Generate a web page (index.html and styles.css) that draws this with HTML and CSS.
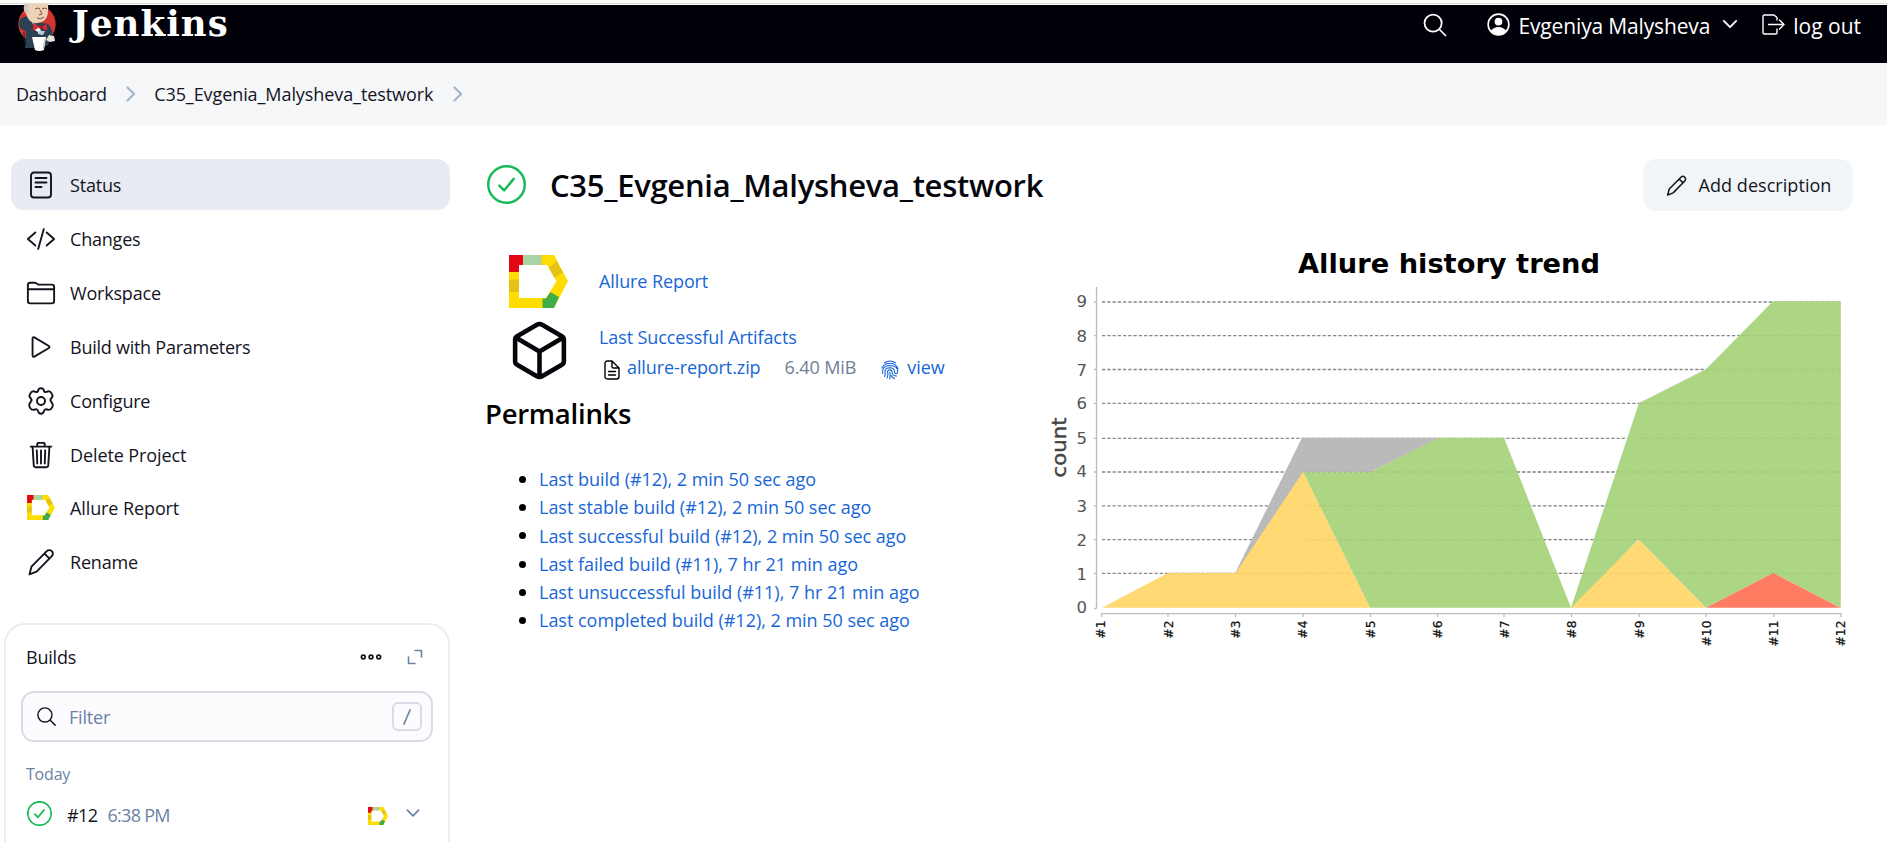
FILE: index.html
```html
<!DOCTYPE html>
<html lang="en">
<head>
<meta charset="utf-8">
<title>C35_Evgenia_Malysheva_testwork [Jenkins]</title>
<link rel="stylesheet" href="styles.css">
</head>
<body>
<svg class="defs" width="0" height="0">
  <symbol id="search" viewBox="0 0 512 512"><path d="M221.09 64a157.09 157.09 0 10157.09 157.09A157.1 157.1 0 00221.09 64zM338.29 338.29L448 448"/></symbol>
  <symbol id="pen" viewBox="0 0 30 30"><path d="M3.5 27.3l2-7.7L20.8 4.2a3.5 3.5 0 015 5L10.6 24.6zM18.5 6.6l5 5"/></symbol>
  <symbol id="chevron" viewBox="0 0 512 512"><path d="M112 184l144 144 144-144"/></symbol>
  <symbol id="check" viewBox="0 0 38 38"><circle cx="19" cy="19" r="17.8"/><path d="M12 20l4.700 4.800L26 13.500"/></symbol>
  <symbol id="allure" viewBox="0 0 59 53">
    <path fill="#ffdd00" d="M0 0H45L59 26.300L45 53H0zM10 10V43H37L47.500 26.300L38 10z" fill-rule="evenodd"/>
    <path fill="#e30613" d="M0 0H14V10H10V17H0z"/>
    <path fill="#a9d3a3" d="M14 0H32.500V10H14z"/>
    <path fill="#e3c315" d="M0 24.500H10V37H0zM47.500 6L54 17.500L45.500 23L40 13z"/>
    <path fill="#3fae49" d="M33.500 43.500H37L41.500 37L50 42L45 53H33.500z"/>
  </symbol>
</svg>

<div class="strip"></div>
<header class="header">
  <a class="brand">
    <svg class="butler" viewBox="0 0 42 50">
      <circle cx="21" cy="20" r="18.700" fill="#d5352f"/>
      <path d="M10 28l-6-4q-3-8 3-11l9-1 4 6 12 2q5 4 4 12l-4 9-6 3H9z" fill="#2c4254"/>
      <path d="M8 28q-1 8 2 13" stroke="#16222c" fill="none"/>
      <path d="M9 0Q9 12 14 17q7 5 15-1 4-5 3-16z" fill="#eed2b5"/>
      <path d="M9 0q-3 5 1 10l3-2-1-8z" fill="#cfc9bf"/>
      <path d="M19 5q3-2 5 0m2 0q3-2 5 0M24 6l2 4-3 1m-2 3q4 2 7-1" stroke="#70503c" fill="none"/>
      <path d="M16 18l8 6 2 7-7-5z" fill="#fff"/>
      <path d="M17 19l7 4-7 4zM25 23l6-3v7z" fill="#d42a31"/>
      <circle cx="25" cy="23" r="2" fill="#a91821"/>
      <path d="M22 27l7 0-2 4-5-1z" fill="#c3cdd5"/>
      <path d="M33 31l5 1 1 5-5 1-4-2z" fill="#e7e3dc"/>
      <path d="M16 33h14l-2 13q-5 2-9 0z" fill="#fff"/>
      <path d="M29 35l-2 10" stroke="#babec4" fill="none"/>
    </svg>
    <span class="brand-name">Jenkins</span>
  </a>
  <nav class="tools">
    <a class="tool tool-search"><svg class="ico thin" width="28" height="28"><use href="#search"/></svg></a>
    <a class="tool tool-user">
      <svg width="23" height="23" viewBox="0 0 24 24"><circle cx="12" cy="12" r="10.800" fill="none" stroke="#fff" stroke-width="1.700"/><circle cx="12" cy="9" r="4" fill="#fff"/><path d="M4 18.500q3-4 8-4t8 4q-3 4-8 4t-8-4z" fill="#fff"/></svg>
      <span class="t-user">Evgeniya Malysheva</span>
      <svg class="ico mid user-chev" width="22" height="22"><use href="#chevron"/></svg>
    </a>
    <a class="tool tool-out">
      <svg class="ico" width="23" height="21" viewBox="0 0 23 21" stroke-width="1.400"><path d="M15 6V3.500L12 1H2.500Q1 1 1 2.500v16Q1 20 2.500 20H13.500Q15 20 15 18.500V15M6.500 10.500H22M17.500 6l4.500 4.500L17.500 15"/></svg>
      <span class="t-out">log out</span>
    </a>
  </nav>
</header>

<nav class="crumbs">
  <a class="t-dash">Dashboard</a>
  <svg class="ico crumb-sep" width="10" height="16" viewBox="0 0 10 16"><path d="M1.500 1.500L8 8l-6.500 6.500"/></svg>
  <a class="t-job">C35_Evgenia_Malysheva_testwork</a>
  <svg class="ico crumb-sep" width="10" height="16" viewBox="0 0 10 16"><path d="M1.500 1.500L8 8l-6.500 6.500"/></svg>
</nav>

<div class="page">
  <aside class="side">
    <nav class="tasks">
      <a class="task active"><svg class="ico" width="30" height="30" viewBox="0 0 30 30" stroke-width="1.900"><rect x="5" y="2.500" width="20" height="25" rx="3"/><path d="M9.500 8h11M9.500 12.500h11M9.500 17h6"/></svg><span>Status</span></a>
      <a class="task"><svg class="ico std" viewBox="0 0 512 512"><path d="M160 368L32 256l128-112M352 368l128-112-128-112M304 86l-96 340"/></svg><span>Changes</span></a>
      <a class="task"><svg class="ico std" viewBox="0 0 512 512"><path d="M440 432H72a40 40 0 01-40-40V120a40 40 0 0140-40h75.890a40 40 0 0122.190 6.720l27.840 18.560a40 40 0 0022.190 6.720H440a40 40 0 0140 40v240a40 40 0 01-40 40zM32 192h448"/></svg><span>Workspace</span></a>
      <a class="task"><svg class="ico std" viewBox="0 0 512 512"><path d="M112 111v290c0 17.440 17 28.520 31 20.160l247.900-148.370c12.120-7.250 12.120-26.330 0-33.580L143 90.840c-14-8.360-31 2.720-31 20.160z"/></svg><span class="t-build">Build with Parameters</span></a>
      <a class="task"><svg class="ico gear" viewBox="0 0 30 30"><circle cx="15" cy="15" r="4"/><path d="M12.200 4.500Q12.500 2.200 15 2.200T17.800 4.500Q18.300 6.500 20.500 5.800Q24 4.300 25.500 7.300Q27.700 10.500 25.300 12.200Q23.500 14 25.300 15.800Q27.700 18.300 26.200 21.300Q24.500 24.800 21 23.500Q18.500 22.700 17.900 25.200Q17.500 27.800 15 27.800T12.100 25.200Q11.500 22.700 9 23.500Q5.500 24.800 3.800 21.300Q2.300 18.300 4.700 15.800Q6.500 14 4.700 12.200Q2.300 10.500 4.500 7.300Q6 4.300 9.500 5.800Q11.700 6.500 12.200 4.500z"/></svg><span>Configure</span></a>
      <a class="task"><svg class="ico std" viewBox="0 0 512 512"><path d="M112 112l20 320c.950 18.490 14.400 32 32 32h184c17.670 0 30.870-13.510 32-32l20-320M80 112h352M192 112V72a23.930 23.930 0 0124-24h80a23.930 23.930 0 0124 24v40M256 176v224M184 176l8 224M328 176l-8 224"/></svg><span class="t-del">Delete Project</span></a>
      <a class="task late"><svg class="al-task" preserveAspectRatio="none"><use href="#allure"/></svg><span class="t-del">Allure Report</span></a>
      <a class="task"><svg class="ico pen30" width="30" height="30"><use href="#pen"/></svg><span>Rename</span></a>
    </nav>
    <section class="builds">
      <div class="builds-head">
        <span class="builds-title">Builds</span>
        <svg class="ico" width="22" height="8" viewBox="0 0 22 8" stroke-width="1.700"><circle cx="3.300" cy="4" r="1.900"/><circle cx="11" cy="4" r="1.900"/><circle cx="18.700" cy="4" r="1.900"/></svg>
        <svg class="ico slate expand" width="16" height="16" viewBox="0 0 16 16" stroke-width="1.600"><path d="M8 1.500h6.500V8M1.500 8v6.500H8"/></svg>
      </div>
      <div class="filter">
        <svg class="ico thin" width="23" height="23"><use href="#search"/></svg>
        <span class="ph">Filter</span>
        <kbd class="key"><svg class="ico slate" width="8" height="16" viewBox="0 0 8 16" stroke-width="1.700"><path d="M7 1L1 15"/></svg></kbd>
      </div>
      <div class="today">Today</div>
      <div class="run">
        <svg class="ok ok-s"><use href="#check"/></svg>
        <span class="num">#12</span><span class="time">6:38 PM</span>
        <svg class="al-run"><use href="#allure"/></svg>
        <svg class="ico slate mid run-chev" width="20" height="20"><use href="#chevron"/></svg>
      </div>
    </section>
  </aside>

  <main class="main">
    <div class="title-row">
      <svg class="ok ok-l"><use href="#check"/></svg>
      <h1>C35_Evgenia_Malysheva_testwork</h1>
      <a class="btn"><svg class="ico pen24" width="23" height="23"><use href="#pen"/></svg><span>Add description</span></a>
    </div>
    <div class="cols">
      <div class="left">
        <div class="link-row r-allure"><svg class="al-main" preserveAspectRatio="none"><use href="#allure"/></svg><a class="t-al">Allure Report</a></div>
        <div class="link-row r-art">
          <svg class="ico cube" viewBox="0 0 512 512"><path d="M448 341.370V170.610A32 32 0 00432.110 143l-152-88.460a47.940 47.940 0 00-48.240 0L79.890 143A32 32 0 0064 170.610v170.760A32 32 0 0079.890 369l152 88.460a48 48 0 0048.240 0l152-88.460A32 32 0 00448 341.370zM69 153.990l187 110 187-110M256 463.990v-200"/></svg>
          <div class="art">
            <a class="t-lsa">Last Successful Artifacts</a>
            <div class="files">
              <svg class="ico" width="16" height="20" viewBox="0 0 16 20" stroke-width="1.400"><path d="M1 3.500Q1 1 3.500 1H8l7 7v8.500Q15 19 12.500 19h-9Q1 19 1 16.500zM8 1v5.500Q8 8 9.500 8H15M4.500 11.500h7M4.500 15h7"/></svg>
              <a class="t-zip">allure-report.zip</a><span class="t-size">6.40 MiB</span>
              <svg class="ico fp" width="18" height="20" viewBox="0 0 18 20" stroke-width="1.100"><path d="M3.500 2.800Q9-.8 14.500 2.800M1 8Q3 3.200 9 3.200T17 8.500M1.800 13.500Q.5 5.600 9 5.500Q16.800 5.800 16.800 11.500Q16.600 13.800 14.800 13.600Q13.300 13.200 13.300 11.200M3.600 16.500Q4.600 14 4 11.500Q4 7.800 8.800 7.800Q13.300 8 13.300 11.200M6 18Q7.500 14.500 6.500 11.500Q6.800 9.800 8.800 9.900Q11 10 11 12.200Q11.500 16 15.500 16M8.700 19Q9.600 15.500 8.800 12.200M13.500 18.600Q11 17.800 10.200 15.500"/></svg>
              <a class="t-view">view</a>
            </div>
          </div>
        </div>
        <h2>Permalinks</h2>
        <ul class="perma">
          <li><a>Last build (#12), 2 min 50 sec ago</a></li>
          <li><a>Last stable build (#12), 2 min 50 sec ago</a></li>
          <li><a>Last successful build (#12), 2 min 50 sec ago</a></li>
          <li><a>Last failed build (#11), 7 hr 21 min ago</a></li>
          <li><a>Last unsuccessful build (#11), 7 hr 21 min ago</a></li>
          <li><a>Last completed build (#12), 2 min 50 sec ago</a></li>
        </ul>
      </div>
      <svg class="chart" viewBox="1040 230 813 425" width="813" height="425">
        <text class="c-title" x="1298" y="273" textLength="302" lengthAdjust="spacingAndGlyphs">Allure history trend</text>
        <path class="grid" d="M1102 302H1841M1102 335.700H1841M1102 369.500H1841M1102 403.300H1841M1102 438.300H1841M1102 472H1841M1102 505.800H1841M1102 539.600H1841M1102 573.300H1841"/>
        <path class="a-gray" d="M1235 573.300L1302 437.700H1440L1370 472.300H1304L1236 573.300z"/>
        <path class="a-green" d="M1303 472.300H1370L1439 437.700H1504L1571 607.700L1639 403L1706 369.300L1773 301.300H1840.800V607.700L1773 573L1706 607.700L1638.500 539.500L1572 607.700H1370z"/>
        <path class="a-yellow" d="M1102 607.700L1168 573H1235.500L1303 472L1370 607.700zM1571 607.700L1638.500 539.500L1706 607.700z"/>
        <path class="a-red" d="M1706 607.700L1773 573L1840.500 607.700z"/>
        <path class="grid-over" d="M1302 472H1841M1302 505.800H1841M1302 539.600H1841M1168 573.300H1841M1640 403.300H1841M1640 438.300H1841M1706 369.500H1841M1742 335.700H1841"/>
        <path class="axis" d="M1096.500 287V608.500M1094 302h2.500M1094 335.700h2.500M1094 369.500h2.500M1094 403.300h2.500M1094 438.300h2.500M1094 472h2.500M1094 505.800h2.500M1094 539.600h2.500M1094 573.300h2.500M1094 608.500h2.500M1101 613.700H1841.500M1101.500 614v3M1168 614v3M1235.500 614v3M1303 614v3M1370.500 614v3M1437.500 614v3M1504 614v3M1571.500 614v3M1639 614v3M1706 614v3M1774 614v3M1841 614v3"/>
        <g class="c-y">
          <text x="1087" y="307">9</text><text x="1087" y="341.500">8</text><text x="1087" y="375.500">7</text><text x="1087" y="409">6</text><text x="1087" y="443.500">5</text><text x="1087" y="477">4</text><text x="1087" y="511.500">3</text><text x="1087" y="545.500">2</text><text x="1087" y="579.500">1</text><text x="1087" y="613">0</text>
        </g>
        <text class="c-count" transform="translate(1065.500 477.500) rotate(-90)" textLength="60" lengthAdjust="spacingAndGlyphs">count</text>
        <g class="c-x">
          <text transform="translate(1105 620.500) rotate(-90)">#1</text><text transform="translate(1172.500 620.500) rotate(-90)">#2</text><text transform="translate(1239.500 620.500) rotate(-90)">#3</text><text transform="translate(1307 620.500) rotate(-90)">#4</text><text transform="translate(1374.500 620.500) rotate(-90)">#5</text><text transform="translate(1442 620.500) rotate(-90)">#6</text><text transform="translate(1508.500 620.500) rotate(-90)">#7</text><text transform="translate(1576 620.500) rotate(-90)">#8</text><text transform="translate(1643.500 620.500) rotate(-90)">#9</text><text transform="translate(1710.500 620.500) rotate(-90)">#10</text><text transform="translate(1778 620.500) rotate(-90)">#11</text><text transform="translate(1845 620.500) rotate(-90)">#12</text>
        </g>
      </svg>
    </div>
  </main>
</div>
</body>
</html>
```

FILE: styles.css
```css
* { box-sizing: border-box; }
html, body { margin: 0; height: 842px; overflow: hidden; }
body { background: #fff; color: #14141f; font: 18px/28px "Open Sans", "Noto Sans", sans-serif; letter-spacing: -0.2px; }
svg { display: block; flex: none; }
a, span { white-space: nowrap; }
.defs { position: absolute; }

.ico { fill: none; stroke: currentColor; stroke-linecap: round; stroke-linejoin: round; }
.ico.thin { stroke-width: 32; }
.ico.mid { stroke-width: 44; }
.ico.std { width: 30px; height: 30px; stroke-width: 32; }
.gear { width: 30px; height: 30px; stroke-width: 1.9; }
.pen30 { stroke-width: 1.9; }
.pen24 { stroke-width: 2; }
.slate { color: #6b82a4; }
.ok { fill: none; stroke: #16ba58; stroke-linecap: round; stroke-linejoin: round; }
.ok-l { width: 39px; height: 39px; stroke-width: 2.4; margin: -2px -1px 0 1px; }
.ok-s { width: 25px; height: 25px; stroke-width: 2.6; margin-top: -3px; }

.strip { height: 5px; background: #fdfdf9; border-bottom: 1px solid #fff; box-shadow: inset 0 -1px #d9d9d9; }
.header { height: 58px; background: #000008; color: #fff; display: flex; justify-content: space-between; }
.brand { display: flex; padding-left: 16px; }
.butler { width: 42px; height: 50px; margin-top: -1px; }
.brand-name { margin-left: 14px; font: bold 35.5px/37px "DejaVu Serif", serif; letter-spacing: 1.1px; }
.tools { display: flex; height: 41px; align-items: center; padding-right: 26px; font-size: 21px; }
.tool { display: flex; align-items: center; }
.tool svg { margin-top: -2px; }
.tool-search { margin-right: 38px; }
.tool-user span { margin: 1px 0 0 9px; letter-spacing: -0.15px; }
.tool-user .user-chev { margin: -3px 0 0 9px; }
.tool-out { margin-left: 21px; }
.tool-out span { margin: 1px 0 0 8px; letter-spacing: 0; }

.crumbs { height: 62px; background: #f5f7f9; display: flex; align-items: center; padding-left: 16px; }
.t-dash { letter-spacing: -0.25px; }
.t-job { letter-spacing: -0.08px; }
.crumb-sep { stroke-width: 2.2; color: #a3b6cc; margin: 0 18px 0 19.5px; }

.page { display: flex; align-items: flex-start; }
.side { width: 451px; padding-top: 34px; }
.tasks { display: flex; flex-direction: column; gap: 2.7px; padding-left: 11px; }
.task { height: 51.3px; border-radius: 13px; display: flex; align-items: center; padding-left: 15px; gap: 14px; }
.task.active { background: #e8ecf2; }
.task.late { margin-top: -1px; }
.t-build { letter-spacing: -0.25px; }
.t-del { letter-spacing: -0.1px; }
.al-task { width: 28px; height: 25px; margin: 0 1px; }
.al-task + span { margin-left: 0; }

.builds { margin: 36px 0 0 4px; height: 260px; border: 2px solid #ebedf2; border-radius: 21px; padding: 0 15px 0 15px; }
.builds-head { height: 66px; display: flex; align-items: center; padding: 0 0 2px 5px; }
.builds-title { flex: 1; }
.expand { margin: 0 10px 0 25px; }
.filter { height: 51px; border: 2px solid #d9dce5; border-radius: 13px; background: #fcfcff; display: flex; align-items: center; padding: 0 9px 0 12px; color: #6b82a4; }
.filter .thin { color: #14141f; }
.ph { flex: 1; margin-left: 11px; }
.key { width: 30px; height: 29px; border: 2px solid #d9dce5; border-radius: 6px; display: flex; align-items: center; justify-content: center; }
.today { margin: 18px 0 0 5px; font-size: 16px; color: #6b82a4; letter-spacing: -0.2px; }
.run { display: flex; align-items: center; height: 52px; padding: 1px 0 0 6px; }
.num { margin-left: 15px; letter-spacing: -0.6px; }
.time { flex: 1; margin-left: 10px; color: #6b82a4; letter-spacing: -0.7px; }
.al-run { width: 20px; height: 18px; margin: 3px 15px 0 0; }
.run-chev { margin: -3px 10px 0 0; }

.main { flex: 1; padding: 34px 34px 0 35px; }
.title-row { display: flex; align-items: center; height: 52px; }
h1 { margin: 0 auto 0 25px; font-size: 31px; line-height: 40px; font-weight: 600; letter-spacing: -0.28px; color: #05050c; }
.ok-l { margin-left: 2px; }
.btn { width: 210px; height: 52px; border-radius: 13px; background: #f2f5f8; display: flex; align-items: center; justify-content: center; gap: 11px; letter-spacing: 0.05px; }
.cols { display: flex; }
.left { width: 555px; color: #000; letter-spacing: -0.1px; }
.left a { color: #1766d6; }
.link-row { display: flex; }
.r-allure { padding: 44px 0 0 24px; align-items: center; }
.al-main { width: 59px; height: 53px; }
.t-al { margin: -2px 0 0 31px; }
.r-art { padding: 9px 0 0 22px; }
.cube { width: 65px; height: 65px; margin-top: 1px; stroke-width: 36; color: #05050c; }
.art { margin: 6px 0 0 27px; }
.t-lsa { display: block; }
.files { display: flex; align-items: center; height: 32px; padding-left: 5px; }
.files > svg { margin-top: 6px; }
.t-zip { margin-left: 7px; }
.t-size { margin-left: 24px; color: #6e8096; }
.files > .fp { margin-left: 25px; color: #1766d6; }
.t-view { margin-left: 8px; }
h2 { margin: 11px 0 0; font-size: 27.5px; line-height: 40px; font-weight: 600; letter-spacing: -0.25px; }
.perma { margin: 31px 0 0; padding: 0 0 0 34px; line-height: 28.3px; list-style: none; letter-spacing: -0.02px; }
.perma li { display: flex; align-items: center; }
.perma li::before { content: ""; width: 7px; height: 7px; border-radius: 50%; background: #000; margin-right: 13px; }

.chart { margin-top: 19px; }
.chart text { font-family: "DejaVu Sans", sans-serif; letter-spacing: 0; }
.c-title { font-size: 27px; font-weight: bold; fill: #000; }
.c-y { font-size: 16.5px; fill: #555; text-anchor: end; }
.c-count { font-size: 19px; fill: #444; stroke: #444; stroke-width: 0.4; }
.c-x { font-size: 12.3px; fill: #111; stroke: #111; stroke-width: 0.25; text-anchor: end; }
.grid { stroke: #888; stroke-width: 1.3; stroke-dasharray: 3.3 1.95; fill: none; }
.grid-over { stroke: #000; stroke-opacity: 0.06; stroke-width: 1.3; stroke-dasharray: 3.3 1.95; fill: none; }
.axis { stroke: #bbb; stroke-width: 1.3; fill: none; }
.a-gray { fill: #bababa; }
.a-green { fill: #acd683; }
.a-yellow { fill: #ffd973; }
.a-red { fill: #ff7c63; }
```
